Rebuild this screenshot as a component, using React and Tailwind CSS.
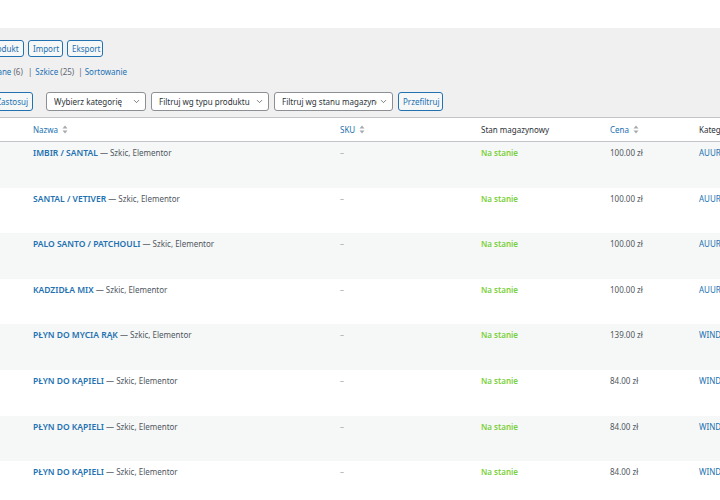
import { ChevronDown } from 'lucide-react';

const rows = [
  { name: 'IMBIR / SANTAL', price: '100.00 zł', cat: 'AUUR' },
  { name: 'SANTAL / VETIVER', price: '100.00 zł', cat: 'AUUR' },
  { name: 'PALO SANTO / PATCHOULI', price: '100.00 zł', cat: 'AUUR' },
  { name: 'KADZIDŁA MIX', price: '100.00 zł', cat: 'AUUR' },
  { name: 'PŁYN DO MYCIA RĄK', price: '139.00 zł', cat: 'WIND' },
  { name: 'PŁYN DO KĄPIELI', price: '84.00 zł', cat: 'WIND' },
  { name: 'PŁYN DO KĄPIELI', price: '84.00 zł', cat: 'WIND' },
  { name: 'PŁYN DO KĄPIELI', price: '84.00 zł', cat: 'WIND' },
];

function SortIcon() {
  return (
    <svg width="6" height="9" viewBox="0 0 6 9" className="ml-1 inline-block">
      <path d="M3 0.5 L5.5 3.5 H0.5 Z" fill="#a7aaad" />
      <path d="M3 8.5 L5.5 5.5 H0.5 Z" fill="#a7aaad" />
    </svg>
  );
}

function Btn({ children, className = '' }) {
  return (
    <button className={`h-[17px] px-[4px] rounded-[3px] border border-[#2271b1] bg-[#f6f7f7] text-[#2271b1] text-[8px] leading-none whitespace-nowrap ${className}`}>
      {children}
    </button>
  );
}

function Select({ label, width }) {
  return (
    <div className={`h-[19px] ${width} flex items-center justify-between pl-[7px] pr-[4px] rounded-[3px] border border-[#8c8f94] bg-white text-[#2c3338] text-[8px] overflow-hidden whitespace-nowrap`}>
      <span className="overflow-hidden">{label}</span>
      <ChevronDown size={9} strokeWidth={2} className="shrink-0 ml-[2px] text-[#50575e]" />
    </div>
  );
}

export default function App() {
  return (
    <div className="w-[720px] h-[500px] overflow-hidden bg-white" style={{ fontFamily: '"Noto Sans", "Open Sans", sans-serif' }}>
      <div className="h-[28px] bg-white" />
      <div className="bg-[#f0f0f1] h-[89px] -ml-[41px]">
        <div className="pt-[12px] flex gap-[4px]">
          <Btn className="w-[65px]">Dodaj produkt</Btn>
          <Btn className="w-[35px]">Import</Btn>
          <Btn className="w-[36px]">Eksport</Btn>
        </div>
        <div className="mt-[9px] -ml-[2px] text-[8px] text-[#646970] whitespace-nowrap">
          <span className="text-[#2271b1]">Opublikowane</span> (6) <span className="mx-[3px]">|</span>
          <span className="text-[#2271b1]">Szkice</span> (25) <span className="mx-[2px]">|</span>
          <span className="text-[#2271b1]">Sortowanie</span>
        </div>
        <div className="mt-[14px] flex items-center">
          <Btn className="h-[19px] w-[40px] ml-[34px] flex items-center justify-end">Zastosuj</Btn>
          <div className="ml-[13px] flex gap-[5px]">
            <Select label="Wybierz kategorię" width="w-[100px]" />
            <Select label="Filtruj wg typu produktu" width="w-[118px]" />
            <Select label="Filtruj wg stanu magazynowego" width="w-[119px]" />
            <Btn className="h-[19px] w-[45px]">Przefiltruj</Btn>
          </div>
        </div>
      </div>
      <div className="border-t border-[#c3c4c7] bg-white text-[8px]">
        <div className="h-[24px] grid grid-cols-[25px_307px_141px_129px_89px_100px] items-center border-b border-[#c3c4c7]">
          <div />
          <div className="pl-[8px] text-[#2271b1] flex items-center">Nazwa<SortIcon /></div>
          <div className="pl-[8px] text-[#2271b1] flex items-center">SKU<SortIcon /></div>
          <div className="pl-[8px] text-[#2c3338]">Stan magazynowy</div>
          <div className="pl-[8px] text-[#2271b1] flex items-center">Cena<SortIcon /></div>
          <div className="pl-[8px] text-[#2c3338] whitespace-nowrap">Kategorie</div>
        </div>
        {rows.map((r, i) => (
          <div
            key={i}
            className={`h-[45.6px] grid grid-cols-[25px_307px_141px_129px_89px_100px] items-start pt-[5px] ${i % 2 === 0 ? 'bg-[#f6f7f7]' : 'bg-white'}`}
          >
            <div />
            <div className="pl-[8px] whitespace-nowrap">
              <span className="font-semibold text-[8.5px] text-[#2271b1]">{r.name}</span>
              <span className="text-[#50575e]"> — Szkic, Elementor</span>
            </div>
            <div className="pl-[8px] text-[#a7aaad]">–</div>
            <div className="pl-[8px] font-semibold text-[#7ad03a]">Na stanie</div>
            <div className="pl-[8px] text-[#50575e]">{r.price}</div>
            <div className="pl-[8px] text-[#2271b1] whitespace-nowrap">{r.cat}</div>
          </div>
        ))}
      </div>
    </div>
  );
}
